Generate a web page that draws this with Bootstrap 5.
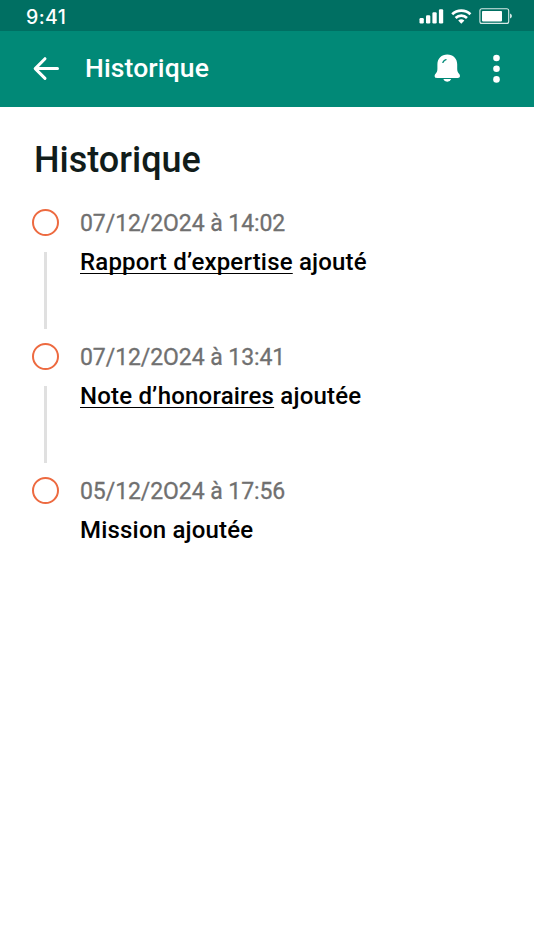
<!DOCTYPE html>
<html lang="fr">
<head>
<meta charset="utf-8">
<meta name="viewport" content="width=device-width, initial-scale=1">
<title>Historique</title>
<link href="https://cdn.jsdelivr.net/npm/bootstrap@5.3.0/dist/css/bootstrap.min.css" rel="stylesheet">
<style>
body{font-family:Roboto,sans-serif;color:#000;background:#fff;min-height:950px}
.status-bar{height:31px;background:#006f62;padding:3px 21px 0 26px}
.clock{font:500 19.5px/28px Inter,sans-serif;letter-spacing:.4px}
.status-icons{height:26px}
.app-bar{height:76px;background:#018977;padding:0 31px 0 33px}
.app-title{font-size:26.5px;font-weight:500;line-height:32px;margin:0 0 2px 25px;letter-spacing:.12px}
.page-title{font-size:36px;font-weight:500;line-height:44px;margin:0 0 27px 2px;color:#111c1a}
.history{padding:31px 32px}
.event{height:134px;gap:21px}
.rail{width:27px}
.rail-dot{width:27px;height:27px;border:2px solid #ed6a40}
.rail-line{width:3px;height:77px;background:#e0e0e0;margin-top:16px;margin-right:1px}
.event-date{font-size:23px;line-height:30px;color:#707070;-webkit-text-stroke:.3px #707070;letter-spacing:-.07px}
.event-text{font-size:24px;line-height:30px;font-weight:500;margin-top:8px;letter-spacing:.19px}
.event-text a{color:#000;text-decoration-thickness:1px;text-underline-offset:3px;text-decoration-skip-ink:none}
svg{display:block;flex:none}
</style>
</head>
<body>
<header class="text-white">
  <div class="status-bar d-flex justify-content-between">
    <span class="clock">9:41</span>
    <div class="status-icons d-flex align-items-center">
      <svg width="94" height="18" viewBox="419 7 94 18" fill="#fff">
        <rect x="419.5" y="18" width="4.3" height="5.5" rx="1.2"/>
        <rect x="426" y="15.2" width="4.3" height="8.3" rx="1.2"/>
        <rect x="432.4" y="12.3" width="4.3" height="11.2" rx="1.2"/>
        <rect x="438.9" y="9.2" width="4.3" height="14.3" rx="1.2"/>
        <g fill="none" stroke="#fff" stroke-width="2.7"><path d="M452.2 14.3a13 13 0 0 1 18.2 0M455.6 18a8.2 8.2 0 0 1 11.4 0"/></g>
        <path d="M458.2 20.6a4.5 4.5 0 0 1 6.2 0L461.3 23.7z"/>
        <rect x="479.9" y="8.8" width="28.8" height="14.6" rx="2" fill="none" stroke="#d7eae7" stroke-width="1.1"/>
        <rect x="482" y="11" width="20" height="10.4" rx=".8"/>
        <path d="M510.2 13.6q1.6.8 1.6 2.5t-1.6 2.5z"/>
      </svg>
    </div>
  </div>
  <nav class="app-bar d-flex align-items-center">
    <svg width="27" height="26" viewBox="33 56 27 26" fill="none" stroke="#fff" stroke-width="3" stroke-linecap="round" stroke-linejoin="round"><path d="M57.5 68.6H35.3M45 58.7L35.2 68.6L45 78.4"/></svg>
    <span class="app-title">Historique</span>
    <svg class="ms-auto" width="70" height="32" viewBox="433 53 70 32" fill="#fff">
      <path d="M447.3 54.5c-5.8 0-9.9 4.2-9.9 9.7v4.7c0 2.500-.7 3.500-1.800 4.800-1 1.200-1.200 2.200-.8 3.100.3.8 1 1.200 2 1.200h21c1 0 1.700-.4 2-1.200.4-.9.2-1.900-.8-3.100-1.100-1.300-1.800-2.300-1.800-4.800v-4.700c0-5.500-4.100-9.700-9.900-9.700zM443.300 79.100a4.100 3.500 0 0 0 7.900 0z"/>
      <path d="M442.900 62.300q1.200-2 3.100-2.600" fill="none" stroke="#018977" stroke-width="1.400" stroke-linecap="round"/>
      <circle cx="496.500" cy="58" r="3.300"/><circle cx="496.500" cy="68.700" r="3.300"/><circle cx="496.500" cy="79.400" r="3.300"/>
    </svg>
  </nav>
</header>
<main class="history">
  <h1 class="page-title">Historique</h1>
  <div class="event d-flex">
    <div class="rail d-flex flex-column align-items-center"><div class="rail-dot rounded-circle"></div><div class="rail-line"></div></div>
    <div><div class="event-date">07/12/2O24 à 14:02</div><div class="event-text"><a href="#">Rapport d’expertise</a> ajouté</div></div>
  </div>
  <div class="event d-flex">
    <div class="rail d-flex flex-column align-items-center"><div class="rail-dot rounded-circle"></div><div class="rail-line"></div></div>
    <div><div class="event-date">07/12/2O24 à 13:41</div><div class="event-text"><a href="#">Note d’honoraires</a> ajoutée</div></div>
  </div>
  <div class="event d-flex">
    <div class="rail d-flex flex-column align-items-center"><div class="rail-dot rounded-circle"></div></div>
    <div><div class="event-date">05/12/2O24 à 17:56</div><div class="event-text">Mission ajoutée</div></div>
  </div>
</main>
<script src="https://cdn.jsdelivr.net/npm/bootstrap@5.3.0/dist/js/bootstrap.bundle.min.js"></script>
</body>
</html>
